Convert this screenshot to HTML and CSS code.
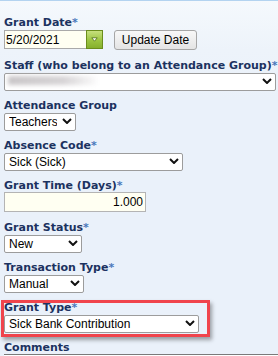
FILE: index.html
```html
<!DOCTYPE html>
<html>
<head>
<meta charset="utf-8">
<link rel="stylesheet" href="styles.css">
</head>
<body>
<div class="page">
  <div class="field">
    <label class="lbl">Grant Date<span class="req">*</span></label>
    <div class="date-row">
      <div class="date-wrap">
        <input class="date-input" value="5/20/2021">
        <span class="cal-btn"><svg width="7" height="5" viewBox="0 0 7 5"><path d="M0.8 0.8 H6.2 L3.5 4.2 Z" fill="#ffffff" stroke="#4d6e12" stroke-width="0.8"/></svg></span>
      </div>
      <button class="btn">Update Date</button>
    </div>
  </div>

  <div class="field">
    <label class="lbl nowrap">Staff (who belong to an Attendance Group)<span class="req">*</span></label>
    <span class="sel w-staff">
      <select class="select"><option> </option></select>
      <span class="blur"></span>
      <svg class="chev" width="10" height="6" viewBox="0 0 10 6"><path d="M1 1 L5 5 L9 1" fill="none" stroke="#111" stroke-width="2"/></svg>
    </span>
  </div>

  <div class="field">
    <label class="lbl">Attendance Group</label>
    <span class="sel w-att">
      <select class="select"><option>Teachers</option></select>
      <svg class="chev" width="10" height="6" viewBox="0 0 10 6"><path d="M1 1 L5 5 L9 1" fill="none" stroke="#111" stroke-width="2"/></svg>
    </span>
  </div>

  <div class="field">
    <label class="lbl">Absence Code<span class="req">*</span></label>
    <span class="sel w-abs">
      <select class="select"><option>Sick (Sick)</option></select>
      <svg class="chev" width="10" height="6" viewBox="0 0 10 6"><path d="M1 1 L5 5 L9 1" fill="none" stroke="#111" stroke-width="2"/></svg>
    </span>
  </div>

  <div class="field">
    <label class="lbl">Grant Time (Days)<span class="req">*</span></label>
    <input class="num-input" value="1.000">
  </div>

  <div class="field">
    <label class="lbl">Grant Status<span class="req">*</span></label>
    <span class="sel w-status">
      <select class="select"><option>New</option></select>
      <svg class="chev" width="10" height="6" viewBox="0 0 10 6"><path d="M1 1 L5 5 L9 1" fill="none" stroke="#111" stroke-width="2"/></svg>
    </span>
  </div>

  <div class="field">
    <label class="lbl">Transaction Type<span class="req">*</span></label>
    <span class="sel w-trans">
      <select class="select"><option>Manual</option></select>
      <svg class="chev" width="10" height="6" viewBox="0 0 10 6"><path d="M1 1 L5 5 L9 1" fill="none" stroke="#111" stroke-width="2"/></svg>
    </span>
  </div>

  <div class="field highlight">
    <label class="lbl">Grant Type<span class="req">*</span></label>
    <span class="sel w-type">
      <select class="select"><option>Sick Bank Contribution</option></select>
      <svg class="chev" width="10" height="6" viewBox="0 0 10 6"><path d="M1 1 L5 5 L9 1" fill="none" stroke="#111" stroke-width="2"/></svg>
    </span>
    <span class="redbox"></span>
  </div>

  <div class="field last">
    <label class="lbl">Comments</label>
    <textarea class="comments"></textarea>
  </div>
</div>
</body>
</html>
```

FILE: styles.css
```css
html, body {
  margin: 0;
  padding: 0;
}
body {
  width: 278px;
  height: 356px;
  overflow: hidden;
  background: linear-gradient(#f5f9fd 0px, #edf3fa 50px, #eaf1fa 100px);
}
.page {
  border-top: 1px solid #b3d3f0;
  padding: 16px 0 0 4px;
}
.field {
  margin-bottom: 10px;
  position: relative;
}
.field.last {
  margin-bottom: 0;
}
.lbl {
  display: block;
  font-family: "DejaVu Sans", Verdana, sans-serif;
  font-weight: bold;
  font-size: 11px;
  line-height: 12px;
  color: #1c3260;
  white-space: nowrap;
}
.req {
  color: #4a78bb;
}
.date-row {
  display: flex;
  align-items: flex-start;
  padding-top: 1px;
  height: 20px;
}
.date-wrap {
  display: flex;
  height: 19px;
}
.date-input {
  box-sizing: border-box;
  width: 82px;
  height: 19px;
  margin: 0;
  border: 1px solid #a9a9a9;
  border-right: none;
  background: #fffff2;
  font-family: "Liberation Sans", Arial, sans-serif;
  font-size: 12px;
  padding: 0 0 0 1px;
  color: #000;
  outline: none;
}
.cal-btn {
  box-sizing: border-box;
  width: 17px;
  height: 19px;
  border: 1px solid #6b8d1c;
  background: linear-gradient(#c6e07e, #9cc441 55%, #86b02c);
  display: flex;
  align-items: center;
  justify-content: center;
}
.cal-btn svg {
  display: block;
}
.btn {
  box-sizing: border-box;
  margin: 0 0 0 11px;
  width: 83px;
  height: 20px;
  padding: 0;
  border: 1px solid #a6a6a6;
  border-radius: 3px;
  background: linear-gradient(#f8f8f8, #e4e4e4);
  font-family: "Liberation Sans", Arial, sans-serif;
  font-size: 12px;
  color: #000;
}
.sel {
  position: relative;
  display: block;
  height: 18px;
}
.select {
  -webkit-appearance: none;
  appearance: none;
  box-sizing: border-box;
  width: 100%;
  height: 18px;
  margin: 0;
  padding: 0 18px 0 4px;
  border: 1px solid #9c9c9c;
  border-radius: 2px;
  background: #ffffff;
  font-family: "Liberation Sans", Arial, sans-serif;
  font-size: 12px;
  color: #000;
  outline: none;
}
.chev {
  position: absolute;
  right: 4px;
  top: 6px;
  pointer-events: none;
}
.blur {
  position: absolute;
  left: 4px;
  top: 4px;
  width: 92px;
  height: 9px;
  background: linear-gradient(90deg, #c9c6c8, #d6d3d5 60%, rgba(230,228,230,0));
  filter: blur(2px);
  pointer-events: none;
}
.w-staff { width: 272px; }
.w-att { width: 72px; }
.w-abs { width: 179px; }
.w-status { width: 78px; }
.w-trans { width: 80px; }
.w-type { width: 195px; }
.num-input {
  display: block;
  box-sizing: border-box;
  width: 142px;
  height: 20px;
  margin: 0;
  padding: 0 2px 0 2px;
  border: 1px solid #b4b4b4;
  background: #fffff2;
  text-align: right;
  font-family: "Liberation Sans", Arial, sans-serif;
  font-size: 12px;
  color: #000;
  outline: none;
}
.redbox {
  position: absolute;
  left: -3px;
  top: -2px;
  width: 209px;
  height: 37px;
  box-sizing: border-box;
  border: 3px solid #f0444c;
  box-shadow: 2px 3px 4px rgba(0, 0, 0, 0.35);
  pointer-events: none;
}
.comments {
  display: block;
  box-sizing: border-box;
  width: 274px;
  height: 2px;
  margin: 0;
  padding: 0;
  border: 0;
  border-top: 1px solid #7a7a7a;
  background: #fff;
  resize: none;
}
```
